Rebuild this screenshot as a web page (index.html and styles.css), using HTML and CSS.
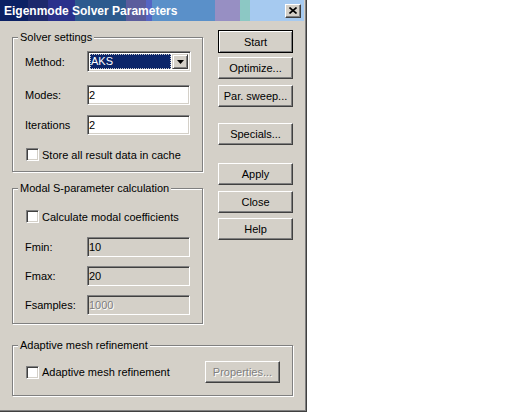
FILE: index.html
```html
<!DOCTYPE html>
<html lang="en">
<head>
  <meta charset="UTF-8" />
  <title>Eigenmode Solver Parameters</title>
  <link rel="stylesheet" href="styles.css">
</head>
<body>
  <div class="dialog">
    <!-- title bar -->
    <div class="titlebar">
      <span class="title">Eigenmode Solver Parameters</span>
      <button class="close" title="Close">
        <svg width="8" height="7" viewBox="0 0 8 7"><path d="M0.5 0.5 L7.5 6.5 M7.5 0.5 L0.5 6.5" stroke="#000" stroke-width="1.6" fill="none"/></svg>
      </button>
    </div>

    <div class="content">
      <div class="top">
        <div class="left">
          <!-- Solver settings -->
          <fieldset class="group group-solver">
            <legend>Solver settings</legend>
            <div class="row row-method">
              <label>Method:</label>
              <div class="combo">
                <span class="combo-value">AKS</span>
                <span class="combo-btn">
                  <svg width="7" height="4" viewBox="0 0 7 4"><path d="M0 0 H7 L3.5 4 Z" fill="#000"/></svg>
                </span>
              </div>
            </div>
            <div class="row row-modes">
              <label>Modes:</label>
              <input class="edit" type="text" value="2">
            </div>
            <div class="row row-iter">
              <label>Iterations</label>
              <input class="edit" type="text" value="2">
            </div>
            <label class="check-row row-cache"><input class="check" type="checkbox">Store all result data in cache</label>
          </fieldset>

          <!-- Modal S-parameter calculation -->
          <fieldset class="group group-modal">
            <legend>Modal S-parameter calculation</legend>
            <label class="check-row row-coef"><input class="check" type="checkbox">Calculate modal coefficients</label>
            <div class="row row-fmin">
              <label>Fmin:</label>
              <input class="edit readonly" type="text" value="10" readonly>
            </div>
            <div class="row row-fmax">
              <label>Fmax:</label>
              <input class="edit readonly" type="text" value="20" readonly>
            </div>
            <div class="row row-fsamples">
              <label>Fsamples:</label>
              <input class="edit readonly" type="text" value="1000" disabled>
            </div>
          </fieldset>
        </div>

        <div class="buttons">
          <button class="btn default">Start</button>
          <button class="btn btn-optimize">Optimize...</button>
          <button class="btn btn-sweep">Par. sweep...</button>
          <button class="btn btn-specials">Specials...</button>
          <button class="btn btn-apply">Apply</button>
          <button class="btn btn-close">Close</button>
          <button class="btn btn-help">Help</button>
        </div>
      </div>

      <!-- Adaptive mesh refinement -->
      <fieldset class="group group-adaptive">
        <legend>Adaptive mesh refinement</legend>
        <div class="adaptive-row">
          <label class="check-row"><input class="check" type="checkbox">Adaptive mesh refinement</label>
          <button class="btn btn-props" disabled>Properties...</button>
        </div>
      </fieldset>
    </div>
  </div>
</body>
</html>
```

FILE: styles.css
```css
body { margin: 0; background: #fff; font: 11px "Liberation Sans", Arial, sans-serif; color: #000; }

.dialog { width: 307px; height: 412px; box-sizing: border-box; background: #d4d0c8; border-right: 1px solid #404040; border-bottom: 1px solid #404040; box-shadow: inset -1px -1px 0 #808080; }

/* title bar */
.titlebar { height: 21px; margin-right: 2px; padding: 0 3px 0 4px; display: flex; align-items: center; justify-content: space-between;
  background: linear-gradient(to right,
    #0b2164 0, #0b2164 28px, #1e2a6c 28px, #1e2a6c 48px, #2a318c 48px, #2a318c 75px,
    #2d5a8e 75px, #2d5a8e 126px, #5b5c9c 126px, #5b5c9c 146px, #5565c4 146px, #5565c4 152px,
    #5a90c9 152px, #5a90c9 215px, #978fc3 215px, #978fc3 240px, #8cc8c4 240px, #8cc8c4 250px,
    #a6caf0 250px); }
.title { color: #fff; font-weight: bold; font-size: 12px; }
.close { width: 16px; height: 14px; padding: 0; display: flex; align-items: center; justify-content: center; background: #d4d0c8;
  border: 1px solid; border-color: #fff #404040 #404040 #fff; box-shadow: inset -1px -1px 0 #808080; }

.content { padding: 10px 12px 0; }
.top { display: flex; gap: 15px; }
.left { width: 191px; }

/* group boxes */
.group { margin: 0; padding: 0; min-width: 0; box-sizing: border-box; border: 1px solid #808080; box-shadow: inset 1px 1px 0 #fff, 1px 1px 0 #fff; }
.group legend { margin-left: 5px; padding: 0 2px; line-height: 13px; background: #d4d0c8; }
.group-solver { height: 141px; }
.group-modal { height: 142px; margin-top: 10px; }
.group-adaptive { width: 281px; height: 57px; margin-top: 15px; }

.row { display: flex; align-items: center; padding-left: 12px; }
.row label { width: 62px; }
.row-method { margin-top: 7px; }
.row-modes { margin-top: 13px; }
.row-iter { margin-top: 10px; }
.row-cache { margin-top: 13px; }
.row-coef { margin-top: 15px; }
.row-fmin { margin-top: 14px; }
.row-fmax, .row-fsamples { margin-top: 9px; }

/* edit fields */
.edit { width: 103px; height: 20px; margin: 0; padding: 0 1px; box-sizing: border-box; font: inherit; color: #000; background: #fff; outline: none;
  border: 1px solid; border-color: #808080 #fff #fff #808080; box-shadow: inset 1px 1px 0 #404040, inset -1px -1px 0 #d4d0c8; }
.edit.readonly { background: #d4d0c8; }
.edit:disabled { color: #808080; text-shadow: 1px 1px 0 #fff; }

/* combo box */
.combo { width: 104px; height: 21px; box-sizing: border-box; padding: 2px; display: flex; background: #fff;
  border: 1px solid; border-color: #808080 #fff #fff #808080; box-shadow: inset 1px 1px 0 #404040, inset -1px -1px 0 #d4d0c8; }
.combo-value { flex: 1; margin-right: 1px; padding-left: 1px; line-height: 15px; color: #fff; background: #0a246a; outline: 1px dotted #c8c8c8; outline-offset: -1px; }
.combo-btn { width: 16px; display: flex; align-items: center; justify-content: center; background: #d4d0c8; box-sizing: border-box;
  border: 1px solid; border-color: #d4d0c8 #404040 #404040 #d4d0c8; box-shadow: inset 1px 1px 0 #fff, inset -1px -1px 0 #808080; }

/* check boxes */
.check-row { display: flex; align-items: center; padding-left: 13px; }
.check { appearance: none; width: 13px; height: 13px; margin: 0 3px 0 0; box-sizing: border-box; background: #fff;
  border: 1px solid; border-color: #808080 #fff #fff #808080; box-shadow: inset 1px 1px 0 #404040, inset -1px -1px 0 #d4d0c8; }

/* push buttons */
.buttons { width: 75px; margin-top: -1px; display: flex; flex-direction: column; }
.btn { height: 22px; padding: 0; font: inherit; color: #000; background: #d4d0c8;
  border: 1px solid; border-color: #fff #404040 #404040 #fff; box-shadow: inset -1px -1px 0 #808080; }
.btn.default { height: 23px; border-color: #000; box-shadow: inset 1px 1px 0 #fff, inset -1px -1px 0 #808080; }
.btn-optimize { margin-top: 4px; }
.btn-sweep { margin-top: 6px; }
.btn-specials { margin-top: 16px; }
.btn-apply { margin-top: 18px; }
.btn-close { margin-top: 6px; }
.btn-help { margin-top: 5px; }
.btn:disabled { color: #808080; text-shadow: 1px 1px 0 #fff; }

.adaptive-row { margin-top: 9px; padding-right: 12px; display: flex; align-items: center; justify-content: space-between; }
.btn-props { width: 75px; }
```
